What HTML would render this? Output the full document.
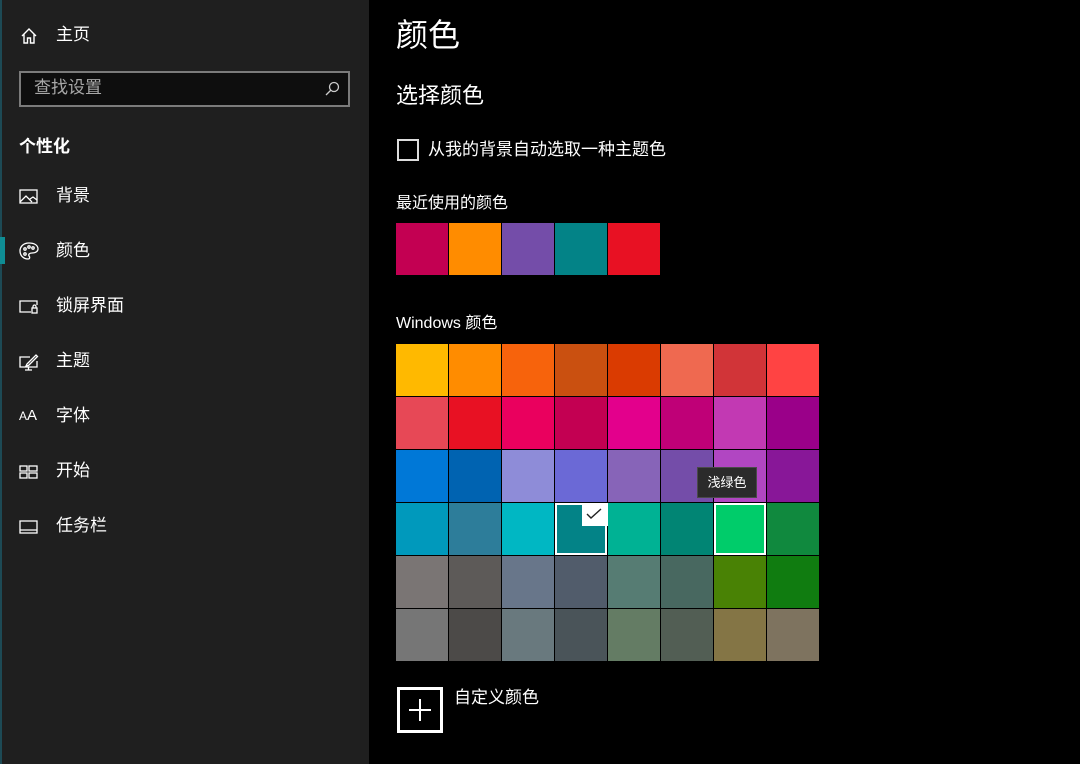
<!DOCTYPE html>
<html><head><meta charset="utf-8"><style>
*{margin:0;padding:0;box-sizing:border-box}
body{width:1080px;height:764px;background:#000;font-family:"Liberation Sans","Noto Sans CJK SC",sans-serif;color:#fff;position:relative;overflow:hidden}
.side{position:absolute;left:0;top:0;width:369px;height:764px;background:#1f1f1f}
.abs{position:absolute;white-space:nowrap}
.it{position:absolute;left:56px;font-size:17px;line-height:20px;color:#fff}
.ic{position:absolute;left:19px;width:20px;height:20px}
.sw{position:absolute;width:52px;height:52px}
</style></head><body>
<div class="side">
<div class="abs" style="left:0;top:0;width:2px;height:764px;background:#1d4a55"></div>
<svg class="ic" style="top:26px" viewBox="0 0 20 20" fill="none" stroke="#fff" stroke-width="1.4"><path d="M3 10 L10 3 L17 10 M5 8 V17 H8.5 V12 H11.5 V17 H15 V8"/></svg>
<div class="it" style="top:25px">主页</div>
<div class="abs" style="left:19px;top:71px;width:331px;height:36px;border:2px solid #7b7b7b;background:#0e0e0e"></div>
<div class="abs" style="left:34px;top:77px;font-size:17px;line-height:22px;color:#a8a8a8">查找设置</div>
<svg class="abs" style="left:323px;top:80px" width="18" height="18" viewBox="0 0 18 18" fill="none" stroke="#ccc" stroke-width="1.3"><circle cx="11" cy="7" r="4.5"/><path d="M8 10 L3 15"/></svg>
<div class="abs" style="left:19px;top:132px;font-size:17px;font-weight:bold">个性化</div>
<svg class="ic" style="top:187px" viewBox="0 0 20 20" fill="none" stroke="#fff" stroke-width="1.3"><rect x="1" y="3" width="17" height="13"/><path d="M1 15 L7 9 L13 15 M11 12 L14 10 L18 13"/></svg>
<div class="it" style="top:186px">背景</div>
<div class="abs" style="left:0;top:237px;width:5px;height:27px;background:#0f8d94"></div>
<svg class="ic" style="top:241px" viewBox="0 0 20 20" fill="none" stroke="#fff" stroke-width="1.3"><path d="M10 2 C4 2 1 6 1 10 C1 15 5 18 9 18 C11 18 11 16 10 15 C9 13 11 12 13 12 C17 12 19 10 19 8 C19 4 15 2 10 2Z"/><circle cx="6" cy="8" r="1.2"/><circle cx="10" cy="6" r="1.2"/><circle cx="14" cy="7" r="1.2"/><circle cx="6" cy="13" r="1.2"/></svg>
<div class="it" style="top:241px">颜色</div>
<svg class="ic" style="top:297px" viewBox="0 0 20 20" fill="none" stroke="#fff" stroke-width="1.3"><path d="M12 15 H1 V4 H18 V8"/><rect x="13" y="11" width="5" height="5"/><path d="M14 11 V9.5 A1.5 1.5 0 0 1 17 9.5 V11"/></svg>
<div class="it" style="top:296px">锁屏界面</div>
<svg class="ic" style="top:352px" viewBox="0 0 20 20" fill="none" stroke="#fff" stroke-width="1.3"><path d="M11 5 H1 V15 H18 V9 M6 18 H13 M9.5 15 V18"/><path d="M8 12 L17 3 L18.5 4.5 L9.5 13.5 L7 14Z"/></svg>
<div class="it" style="top:351px">主题</div>
<div class="abs" style="left:19px;top:406px;font-size:12px;line-height:20px">A<span style="font-size:15px">A</span></div>
<div class="it" style="top:406px">字体</div>
<svg class="ic" style="top:462px" viewBox="0 0 20 20" fill="none" stroke="#fff" stroke-width="1.3"><rect x="1" y="4" width="7" height="5"/><rect x="10" y="4" width="8" height="5"/><rect x="1" y="11" width="7" height="5"/><rect x="10" y="11" width="8" height="5"/></svg>
<div class="it" style="top:461px">开始</div>
<svg class="ic" style="top:517px" viewBox="0 0 20 20" fill="none" stroke="#fff" stroke-width="1.3"><rect x="1" y="4" width="17" height="12"/><path d="M1 13 H18"/></svg>
<div class="it" style="top:516px">任务栏</div>
</div>

<div class="abs" style="left:396px;top:14px;font-size:32px;line-height:42px">颜色</div>
<div class="abs" style="left:396px;top:81px;font-size:22px;line-height:30px">选择颜色</div>
<div class="abs" style="left:397px;top:139px;width:22px;height:22px;border:2px solid #ddd"></div>
<div class="abs" style="left:428px;top:139px;font-size:17px;line-height:22px">从我的背景自动选取一种主题色</div>
<div class="abs" style="left:396px;top:193px;font-size:16px;line-height:22px">最近使用的颜色</div>
<div class="sw" style="left:396px;top:223px;background:#C30052"></div>
<div class="sw" style="left:449px;top:223px;background:#FF8C00"></div>
<div class="sw" style="left:502px;top:223px;background:#744DA9"></div>
<div class="sw" style="left:555px;top:223px;background:#038387"></div>
<div class="sw" style="left:608px;top:223px;background:#E81123"></div>
<div class="abs" style="left:396px;top:313px;font-size:16px;line-height:22px">Windows 颜色</div>
<div id="g"></div>
<script>
var c=[["#FFB900","#FF8C00","#F7630C","#CA5010","#DA3B01","#EF6950","#D13438","#FF4343"],
["#E74856","#E81123","#EA005E","#C30052","#E3008C","#BF0077","#C239B3","#9A0089"],
["#0078D7","#0063B1","#8E8CD8","#6B69D6","#8764B8","#744DA9","#B146C2","#881798"],
["#0099BC","#2D7D9A","#00B7C3","#038387","#00B294","#018574","#00CC6A","#10893E"],
["#7A7574","#5D5A58","#68768A","#515C6B","#567C73","#486860","#498205","#107C10"],
["#767676","#4C4A48","#69797E","#4A5459","#647C64","#525E54","#847545","#7E735F"]];
var h="";for(var r=0;r<6;r++)for(var k=0;k<8;k++){var b=(r==3&&(k==3||k==6))?"border:2px solid #fff;":"";h+='<div class="sw" style="left:'+(396+53*k)+'px;top:'+(344+53*r)+'px;background:'+c[r][k]+';'+b+'"></div>';}
document.getElementById("g").innerHTML=h;
</script>
<div class="abs" style="left:582px;top:503px;width:26px;height:23px;background:#fff"></div>
<svg class="abs" style="left:586px;top:508px" width="16" height="12" viewBox="0 0 16 12" fill="none" stroke="#222" stroke-width="1.4"><path d="M1 6 L5 10 L15 1"/></svg>
<div class="abs" style="left:697px;top:467px;width:60px;height:31px;background:#2b2b2b;border:1px solid #4a4a4a;font-size:13px;line-height:29px;text-align:center">浅绿色</div>
<div class="abs" style="left:397px;top:687px;width:46px;height:46px;border:3px solid #fff"></div>
<div class="abs" style="left:409px;top:709px;width:22px;height:2px;background:#fff"></div>
<div class="abs" style="left:419px;top:699px;width:2px;height:22px;background:#fff"></div>
<div class="abs" style="left:454px;top:687px;font-size:17px;line-height:22px">自定义颜色</div>
</body></html>
